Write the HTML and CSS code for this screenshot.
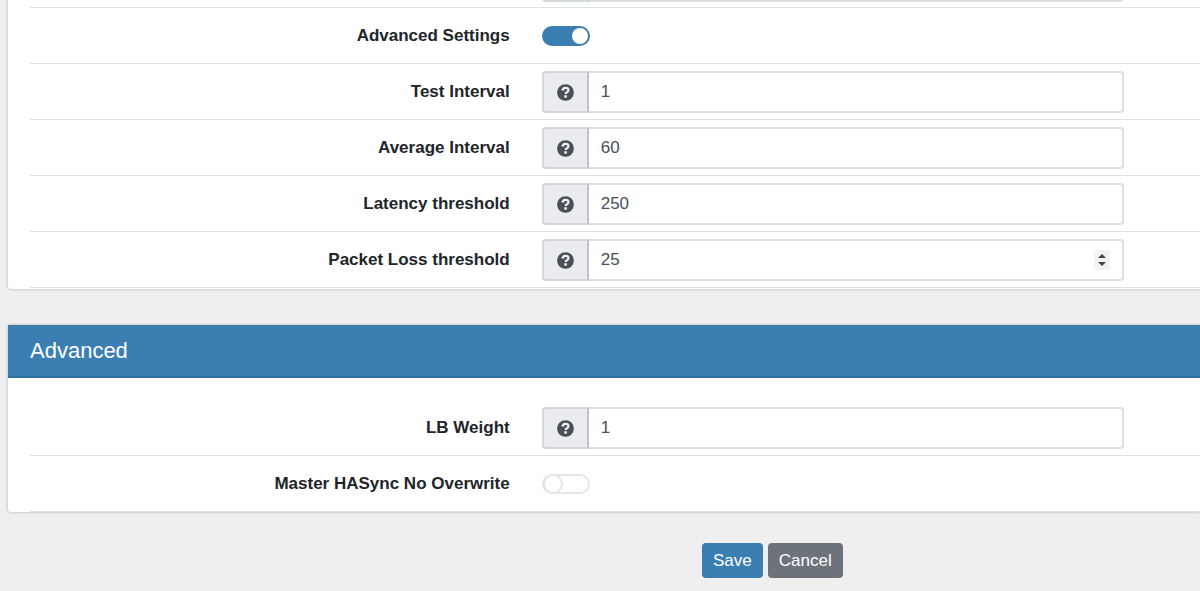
FILE: index.html
```html
<!DOCTYPE html>
<html lang="en">

<head>
    <meta charset="UTF-8">
    <meta name="viewport" content="width=device-width, initial-scale=1.0">
    <title>Gateway</title>
    <link rel="stylesheet" href="styles.css">
</head>

<body>

    <!-- Shared help icon -->
    <svg class="sprite" aria-hidden="true">
        <symbol id="help" viewBox="0 0 512 512">
            <circle cx="256" cy="256" r="252" fill="currentColor"/>
            <path d="M164 196c10-48 44-76 94-76 54 0 88 30 88 70 0 58-86 60-86 110" fill="none" stroke="#ebecef" stroke-width="68"/>
            <circle cx="258" cy="376" r="44" fill="#ebecef"/>
        </symbol>
    </svg>

    <form>
        <section class="panel panel-top">
            <div class="panel-body">
                <div class="form-row row-cut">
                    <div class="control input-group">
                        <span class="addon"></span>
                        <input type="text" aria-label="Monitor">
                    </div>
                </div>
                <div class="form-row">
                    <label for="advanced-settings">Advanced Settings</label>
                    <div class="control">
                        <input type="checkbox" class="switch" id="advanced-settings" checked>
                    </div>
                </div>
                <div class="form-row">
                    <label for="test-interval">Test Interval</label>
                    <div class="control input-group">
                        <span class="addon"><svg><use href="#help"/></svg></span>
                        <input type="number" id="test-interval" value="1">
                    </div>
                </div>
                <div class="form-row">
                    <label for="average-interval">Average Interval</label>
                    <div class="control input-group">
                        <span class="addon"><svg><use href="#help"/></svg></span>
                        <input type="number" id="average-interval" value="60">
                    </div>
                </div>
                <div class="form-row">
                    <label for="latency">Latency threshold</label>
                    <div class="control input-group">
                        <span class="addon"><svg><use href="#help"/></svg></span>
                        <input type="number" id="latency" value="250">
                    </div>
                </div>
                <div class="form-row">
                    <label for="packet-loss">Packet Loss threshold</label>
                    <div class="control input-group">
                        <span class="addon"><svg><use href="#help"/></svg></span>
                        <input type="number" id="packet-loss" value="25">
                        <svg class="spinner" viewBox="0 0 16 20" aria-hidden="true">
                            <path d="M4 8l4-4 4 4zM4 12l4 4 4-4z" fill="#444"/>
                        </svg>
                    </div>
                </div>
            </div>
        </section>

        <section class="panel">
            <h2>Advanced</h2>
            <div class="panel-body">
                <div class="form-row">
                    <label for="lb-weight">LB Weight</label>
                    <div class="control input-group">
                        <span class="addon"><svg><use href="#help"/></svg></span>
                        <input type="number" id="lb-weight" value="1">
                    </div>
                </div>
                <div class="form-row">
                    <label for="no-overwrite">Master HASync No Overwrite</label>
                    <div class="control">
                        <input type="checkbox" class="switch" id="no-overwrite">
                    </div>
                </div>
            </div>
        </section>

        <div class="actions">
            <button type="submit" class="btn btn-save">Save</button>
            <button type="button" class="btn btn-cancel">Cancel</button>
        </div>
    </form>

</body>

</html>
```
FILE: styles.css
```css
*,
*::before {
    box-sizing: border-box;
}

body {
    margin: 0;
    background-color: #efeff0;
    font-family: "Liberation Sans", Arial, sans-serif;
    font-size: 17px;
    color: #212529;
    overflow-x: hidden;
}

.sprite {
    display: none;
}

.panel {
    margin: 0 0 31px 8px;
    background-color: #fff;
    border-radius: 3px 0 0 3px;
    box-shadow: 0 0 3px rgba(0, 0, 0, 0.3);
}

.panel-top {
    margin-bottom: 36px;
    padding-bottom: 1px;
    border-top-left-radius: 0;
}

.panel h2 {
    margin: 0;
    padding: 0 22px;
    height: 53px;
    line-height: 52px;
    background-color: #3b7fb2;
    border-bottom: 2px solid #30709f;
    color: #fff;
    font-size: 22px;
    font-weight: normal;
}

.panel-body {
    padding: 22px 0 0 22px;
}

.panel-top .panel-body {
    padding-top: 0;
}

.form-row {
    display: flex;
    min-height: 56px;
    padding: 7px 0 6px;
    border-bottom: 1px solid #dee2e6;
}

/* tail of the row above, scrolled out of view */
.row-cut {
    height: 8px;
    min-height: 0;
    padding: 0 0 5px;
    align-items: flex-end;
    overflow: hidden;
}

.row-cut .control {
    margin-left: calc(41% + 32px);
}

.form-row label {
    flex: 0 0 41%;
    margin-right: 32px;
    line-height: 42px;
    text-align: right;
    font-weight: bold;
}

.control {
    display: flex;
    align-items: center;
    flex: 0 0 50%;
    max-width: 582px;
    height: 42px;
}

.input-group {
    position: relative;
}

.addon {
    display: flex;
    align-items: center;
    justify-content: center;
    width: 47px;
    height: 42px;
    background-color: #ebecef;
    border: 2px solid #d4d7dc;
    border-right-color: #bfc2c8;
    border-radius: 4px 0 0 4px;
}

.addon svg {
    width: 17px;
    height: 17px;
    color: #495057;
}

.input-group input {
    flex: 1;
    min-width: 0;
    height: 42px;
    padding: 0 12px;
    border: 2px solid #dcdee3;
    border-left: 0;
    border-radius: 0 4px 4px 0;
    background-color: #fff;
    color: #495057;
    font: inherit;
    appearance: textfield;
}

.input-group input::-webkit-inner-spin-button {
    appearance: none;
    margin: 0;
}

.spinner {
    position: absolute;
    top: 11px;
    right: 14px;
    width: 16px;
    height: 20px;
    background-color: #f3f3f4;
}

.switch {
    appearance: none;
    display: flex;
    align-items: center;
    width: 48px;
    height: 20px;
    margin: 0;
    border: 2px solid #e3e5e9;
    border-radius: 10px;
    background-color: #fff;
}

.switch::before {
    content: "";
    width: 20px;
    height: 20px;
    margin-left: -1px;
    flex-shrink: 0;
    border: 2px solid #e3e5e9;
    border-radius: 50%;
    background-color: #fff;
}

.switch:checked {
    justify-content: flex-end;
    border-color: #3b7fb2;
    background-color: #3b7fb2;
}

.switch:checked::before {
    width: 16px;
    height: 16px;
    border: 0;
}

.actions {
    display: flex;
    gap: 5px;
    padding-left: 58.5%;
    padding-bottom: 13px;
}

.btn {
    height: 35px;
    padding: 0 11px;
    border: 0;
    border-radius: 4px;
    color: #fff;
    font-family: inherit;
    font-size: 17px;
    cursor: pointer;
}

.btn-save {
    background-color: #3b7fb2;
}

.btn-cancel {
    background-color: #6c737b;
}
```
